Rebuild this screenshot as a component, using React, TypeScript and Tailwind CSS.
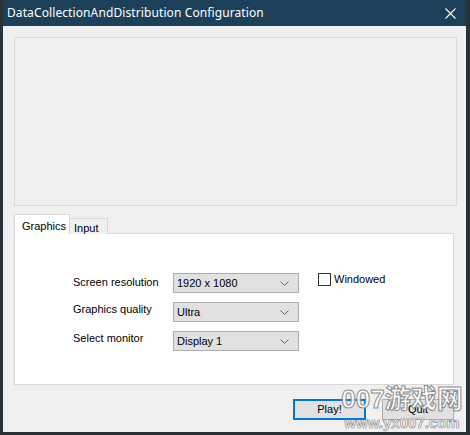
import React from 'react';

const Chevron: React.FC = () => (
  <svg width="9" height="5" viewBox="0 0 9 5" className="shrink-0">
    <path d="M0.5 0.5 L4.5 4.5 L8.5 0.5" fill="none" stroke="#606060" strokeWidth="1" />
  </svg>
);

const Combo: React.FC<{ value: string }> = ({ value }) => (
  <div className="flex items-center justify-between w-[126px] h-[20px] pl-[3px] pr-[9px] bg-[#e1e1e1] border border-[#adadad] text-[11px] text-black">
    <span>{value}</span>
    <Chevron />
  </div>
);

const App: React.FC = () => {
  return (
    <div
      className="relative w-[470px] h-[435px] bg-[#2b3237] pl-[3px] pr-[4px] pb-[3px] overflow-hidden"
      style={{ fontFamily: '"Liberation Sans", Arial, sans-serif' }}
    >
      <div className="flex flex-col h-full">
        {/* Title bar */}
        <div className="flex items-center justify-between h-[26px] bg-[#1c405a] pl-[4px] pr-[10px] text-white">
          <span className="text-[12px] tracking-[0.1px]" style={{ fontFamily: '"Noto Sans", "Open Sans", sans-serif' }}>
            DataCollectionAndDistribution Configuration
          </span>
          <svg width="11" height="11" viewBox="0 0 11 11">
            <path d="M0.5 0.5 L10.5 10.5 M10.5 0.5 L0.5 10.5" stroke="#ffffff" strokeWidth="1.1" />
          </svg>
        </div>

        {/* Body */}
        <div className="flex-1 bg-[#f0f0f0] pl-[11px] pr-[9px] pt-[11px]">
          {/* Banner area */}
          <div className="w-[443px] h-[169px] border border-[#dadada] bg-[#f0f0f0]" />

          {/* Tabs */}
          <div className="mt-[8px] flex items-end h-[20px] text-[11px] text-black">
            <div className="relative z-10 h-[20px] w-[56px] pl-[7px] pt-[3px] bg-white border border-b-0 border-[#d9d9d9]">
              Graphics
            </div>
            <div className="h-[16px] w-[38px] pl-[4px] pt-[1px] bg-[#f0f0f0] border border-l-0 border-b-0 border-[#d9d9d9]">
              Input
            </div>
          </div>
          <div className="-mt-px w-[440px] h-[152px] bg-white border border-[#d9d9d9] pt-[39px] pl-[58px]">
            <div className="flex gap-[19px]">
              <div className="flex flex-col">
                <div className="flex items-center">
                  <span className="w-[100px] text-[11px] -mt-[2px]">Screen resolution</span>
                  <Combo value="1920 x 1080" />
                </div>
                <div className="flex items-center mt-[9px]">
                  <span className="w-[100px] text-[11px] -mt-[5px]">Graphics quality</span>
                  <Combo value="Ultra" />
                </div>
                <div className="flex items-center mt-[9px]">
                  <span className="w-[100px] text-[11px] -mt-[6px]">Select monitor</span>
                  <Combo value="Display 1" />
                </div>
              </div>
              <div className="flex items-start gap-[3px] -mt-[1px]">
                <div className="w-[13px] h-[13px] mt-[1px] border border-[#333333] bg-white" />
                <span className="text-[11px] leading-[14px]">Windowed</span>
              </div>
            </div>
          </div>

          {/* Buttons */}
          <div className="flex justify-end gap-[16px] mt-[14px] pr-[3px]">
            <button className="w-[73px] h-[21px] bg-[#e1e1e1] border-2 border-[#0078d7] text-[11px] text-black">
              Play!
            </button>
            <button className="w-[72px] h-[21px] bg-[#e1e1e1] border border-[#adadad] text-[11px] text-black">
              Quit
            </button>
          </div>
        </div>
      </div>

      {/* Watermark overlay */}
      <div className="absolute left-[340px] top-[384px] w-[124px] flex flex-col items-center whitespace-nowrap pointer-events-none select-none">
        <span
          className="text-[26px] leading-[30px] font-bold text-white/85 [-webkit-text-stroke:1px_#8c8c8c]"
          style={{ fontFamily: '"Liberation Sans", "Noto Sans CJK SC", sans-serif' }}
        >
          007游戏网
        </span>
        <span className="text-[15px] leading-[17px] font-bold text-white/85 [-webkit-text-stroke:0.7px_#8c8c8c]">
          www.yx007.com
        </span>
      </div>
    </div>
  );
};

export default App;
